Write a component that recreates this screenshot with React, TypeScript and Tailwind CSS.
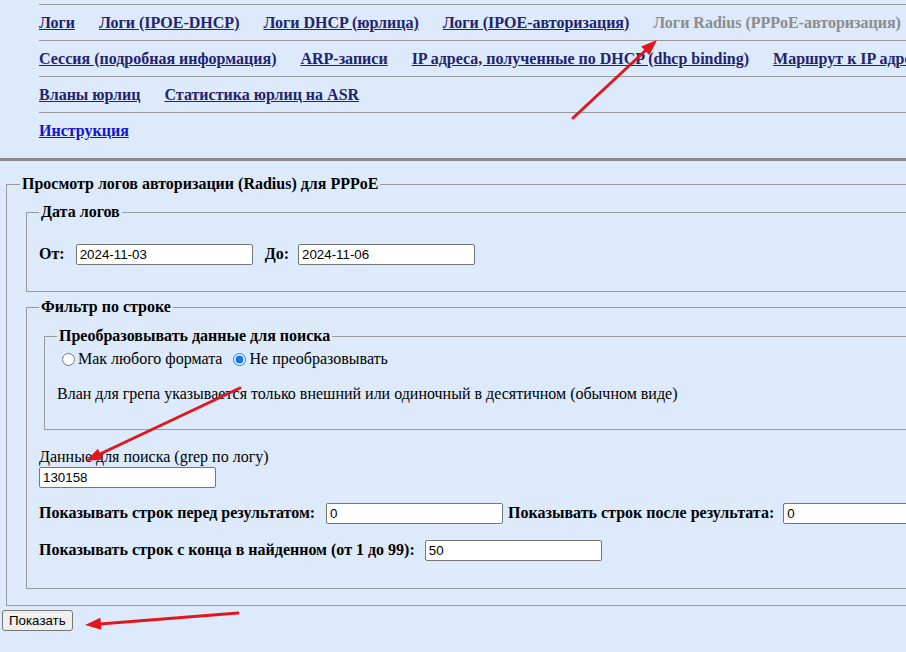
import React from 'react'

const navRows: { label: string; kind?: 'active' | 'fresh' }[][] = [
  [
    { label: 'Логи' },
    { label: 'Логи (IPOE-DHCP)' },
    { label: 'Логи DHCP (юрлица)' },
    { label: 'Логи (IPOE-авторизация)' },
    { label: 'Логи Radius (PPPoE-авторизация)', kind: 'active' },
  ],
  [
    { label: 'Сессия (подробная информация)' },
    { label: 'ARP-записи' },
    { label: 'IP адреса, полученные по DHCP (dhcp binding)' },
    { label: 'Маршрут к IP адресу' },
  ],
  [
    { label: 'Вланы юрлиц' },
    { label: 'Статистика юрлиц на ASR' },
  ],
  [{ label: 'Инструкция', kind: 'fresh' }],
]

const fieldset = 'border border-[#9a9a9a] px-3 pt-[6px] pb-[10px] min-w-0'
const legend = 'px-[2px] font-bold leading-[18px]'
const input =
  "h-[21px] w-[177px] bg-white border border-[#767676] rounded-[2px] px-[3px] text-[13.33px] font-['Liberation_Sans',Arial,sans-serif] text-black outline-none"

export default function App() {

  return (

    <div className="relative w-[906px] h-[652px] overflow-hidden bg-[#dceafb] text-black text-[16px] font-['Liberation_Serif','Times_New_Roman',serif]">

      <div className="w-[1200px]">

        {/* NAV */}

        <div className="pl-[39px] pt-[4px]">
          {navRows.map((row, i) => (
            <div key={i} className="h-[36px] border-t border-[#9a9a9a] flex items-center gap-6 whitespace-nowrap">
              {row.map((l) =>
                l.kind === 'active' ? (
                  <span key={l.label} className="font-bold text-[#8c8c8c]">{l.label}</span>
                ) : (
                  <a
                    key={l.label}
                    href="#"
                    className={
                      'font-bold underline ' +
                      (l.kind === 'fresh' ? 'text-[#1414d4]' : 'text-[#23236e]')
                    }
                  >
                    {l.label}
                  </a>
                )
              )}
            </div>
          ))}
        </div>

        <div className="mt-[10px] h-[3px] bg-[#8a8a8a]" />

        {/* FORM */}

        <form className="mt-[14px]" onSubmit={(e) => e.preventDefault()}>

          <fieldset className={fieldset + ' ml-[6px] pb-[16px]'}>
            <legend className={legend + ' ml-[1px]'}>Просмотр логов авторизации (Radius) для PPPoE</legend>

            <fieldset className={fieldset + ' ml-[7px] mt-[4px]'}>
              <legend className={legend}>Дата логов</legend>
              <div className="mt-[15px] mb-[15px] flex items-center whitespace-nowrap">
                <b>От:</b>
                <input className={input + ' ml-[11px]'} defaultValue="2024-11-03" />
                <b className="ml-[12px]">До:</b>
                <input className={input + ' ml-[9px]'} defaultValue="2024-11-06" />
              </div>
            </fieldset>

            <fieldset className={fieldset + ' ml-[7px] mt-[6px] pb-[9px]'}>
              <legend className={legend}>Фильтр по строке</legend>

              <fieldset className={fieldset + ' ml-[5px] mt-[5px] pt-[1px]'}>
                <legend className={legend}>Преобразовывать данные для поиска</legend>
                <div className="-mt-[4px] flex items-center whitespace-nowrap">
                  <input type="radio" name="conv" className="ml-[5px] mr-[3px] w-[13px] h-[13px]" />
                  <span>Мак любого формата</span>
                  <input type="radio" name="conv" defaultChecked className="ml-[11px] mr-[3px] w-[13px] h-[13px] accent-[#1a73e8]" />
                  <span>Не преобразовывать</span>
                </div>
                <p className="mt-[11px] mb-[13px] whitespace-nowrap">
                  Влан для грепа указывается только внешний или одиночный в десятичном (обычном виде)
                </p>
              </fieldset>

              <div className="mt-[18px] leading-[18px]">Данные для поиска (grep по логу)</div>
              <input className={input + ' block mt-[1px]'} defaultValue="130158" />

              <div className="mt-[13px] flex items-center whitespace-nowrap">
                <b>Показывать строк перед результатом:</b>
                <input className={input + ' ml-[11px]'} defaultValue="0" />
                <b className="ml-[5px]">Показывать строк после результата:</b>
                <input className={input + ' ml-[9px]'} defaultValue="0" />
              </div>

              <div className="mt-[13px] mb-4 flex items-center whitespace-nowrap">
                <b>Показывать строк с конца в найденном (от 1 до 99):</b>
                <input className={input + ' ml-[10px]'} defaultValue="50" />
              </div>
            </fieldset>

          </fieldset>

          <button
            type="submit"
            className="ml-[2px] mt-[4px] h-[21px] px-[6px] bg-[#efefef] border border-[#767676] rounded-[3px] text-[13.33px] font-['Liberation_Sans',Arial,sans-serif]"
          >
            Показать
          </button>

        </form>

      </div>

      {/* annotation arrows */}

      <svg className="pointer-events-none absolute inset-0" width="906" height="652">
        <g stroke="#e3161c" strokeWidth="3" strokeLinecap="round" fill="#e3161c">
          <line x1="573" y1="118" x2="646" y2="50" />
          <polygon points="657,40 649.4,55.3 641.2,46.5" stroke="none" />
          <line x1="240" y1="388" x2="100" y2="454" />
          <polygon points="86,461 97.9,448.7 103.1,459.5" stroke="none" />
          <line x1="238" y1="613" x2="100" y2="624" />
          <polygon points="85,625 100.4,617.8 101.4,629.7" stroke="none" />
        </g>
      </svg>

    </div>

  )

}
